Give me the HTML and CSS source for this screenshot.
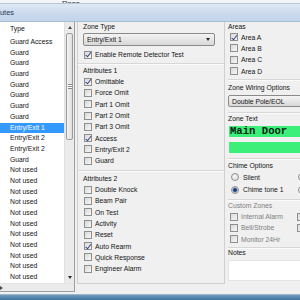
FILE: index.html
```html
<!DOCTYPE html>
<html lang="en">
<head>
<meta charset="utf-8">
<title>Zone Attributes</title>
<link rel="stylesheet" href="styles.css">
</head>
<body>
<div class="topstrip"><span class="tab">Pass</span></div>
<div class="titlebar">utes</div>

<div class="main">
 <!-- Zone list -->
 <div class="list">
  <div class="list-body">
   <div class="rows">
    <div class="row head">Type</div>
    <div class="row">Guard Access</div>
    <div class="row">Guard</div>
    <div class="row">Guard</div>
    <div class="row">Guard</div>
    <div class="row">Guard</div>
    <div class="row">Guard</div>
    <div class="row">Guard</div>
    <div class="row">Guard</div>
    <div class="row sel">Entry/Exit 1</div>
    <div class="row">Entry/Exit 2</div>
    <div class="row">Entry/Exit 2</div>
    <div class="row">Guard</div>
    <div class="row">Not used</div>
    <div class="row">Not used</div>
    <div class="row">Not used</div>
    <div class="row">Not used</div>
    <div class="row">Not used</div>
    <div class="row">Not used</div>
    <div class="row">Not used</div>
    <div class="row">Not used</div>
    <div class="row">Not used</div>
    <div class="row">Not used</div>
    <div class="row">Not used</div>
   </div>
   <div class="vscroll">
    <span class="sbtn"><i class="tri up"></i></span>
    <span class="track"><span class="thumb"><i class="grip"></i></span></span>
    <span class="sbtn"><i class="tri down"></i></span>
   </div>
  </div>
  <div class="hscroll">
   <span class="hbar"><i class="tri right"></i></span>
   <span class="corner"></span>
  </div>
 </div>

 <!-- Middle column -->
 <div class="mid">
  <div class="group g-type">
   <div class="lbl">Zone Type</div>
   <div class="select wide">Entry/Exit 1<i class="tri down"></i></div>
   <div class="chk first"><span class="cb on"></span>Enable Remote Detector Test</div>
  </div>
  <div class="group g-attr">
   <div class="lbl">Attributes 1</div>
   <div class="chk"><span class="cb on"></span>Omittable</div>
   <div class="chk"><span class="cb"></span>Force Omit</div>
   <div class="chk"><span class="cb"></span>Part 1 Omit</div>
   <div class="chk"><span class="cb"></span>Part 2 Omit</div>
   <div class="chk"><span class="cb"></span>Part 3 Omit</div>
   <div class="chk"><span class="cb on"></span>Access</div>
   <div class="chk"><span class="cb"></span>Entry/Exit 2</div>
   <div class="chk"><span class="cb"></span>Guard</div>
  </div>
  <div class="group g-attr2">
   <div class="lbl">Attributes 2</div>
   <div class="chk"><span class="cb"></span>Double Knock</div>
   <div class="chk"><span class="cb"></span>Beam Pair</div>
   <div class="chk"><span class="cb"></span>On Test</div>
   <div class="chk"><span class="cb"></span>Activity</div>
   <div class="chk"><span class="cb"></span>Reset</div>
   <div class="chk"><span class="cb on"></span>Auto Rearm</div>
   <div class="chk"><span class="cb"></span>Quick Response</div>
   <div class="chk"><span class="cb"></span>Engineer Alarm</div>
  </div>
 </div>

 <!-- Right column -->
 <div class="right">
  <div class="group g-areas">
   <div class="lbl">Areas</div>
   <div class="chk"><span class="cb on"></span>Area A</div>
   <div class="chk"><span class="cb"></span>Area B</div>
   <div class="chk"><span class="cb"></span>Area C</div>
   <div class="chk"><span class="cb"></span>Area D</div>
  </div>
  <div class="group g-wiring">
   <div class="lbl">Zone Wiring Options</div>
   <div class="select long">Double Pole/EOL<i class="tri down"></i></div>
  </div>
  <div class="group g-text">
   <div class="lbl">Zone Text</div>
   <div class="lcd">Main Door</div>
   <div class="lcd second"></div>
  </div>
  <div class="group g-chime">
   <div class="lbl">Chime Options</div>
   <div class="cols">
    <div class="opt"><span class="rb"></span>Silent</div>
    <div class="opt"><span class="rb"></span></div>
    <div class="opt"><span class="rb on"></span>Chime tone 1</div>
    <div class="opt"><span class="rb"></span></div>
   </div>
  </div>
  <div class="group g-custom">
   <div class="lbl dim">Custom Zones</div>
   <div class="cols tight">
    <div class="chk dim"><span class="cb"></span>Internal Alarm</div>
    <div class="chk dim"><span class="cb"></span></div>
    <div class="chk dim"><span class="cb"></span>Bell/Strobe</div>
    <div class="chk dim"><span class="cb"></span></div>
    <div class="chk dim"><span class="cb"></span>Monitor 24Hr</div>
   </div>
  </div>
  <div class="group g-notes">
   <div class="lbl">Notes</div>
   <div class="notes"></div>
  </div>
 </div>
</div>

<div class="taskbar"></div>
</body>
</html>
```

FILE: styles.css
```css
/* ---------- Base ---------- */
*{box-sizing:border-box}
html,body{margin:0;width:300px;height:300px;overflow:hidden}
body{font-family:"Liberation Sans",Arial,sans-serif;font-size:6.8px;color:#141414;background:#f0f0f0}

/* ---------- Window chrome ---------- */
.topstrip{height:4px;background:#f3f5f8;border-bottom:1px solid #b7c7da;position:relative;overflow:hidden;padding-left:58px}
.topstrip .tab{display:inline-block;height:4px;line-height:0;font-size:8px;color:#333;border-left:1px solid #7a8796;border-right:1px solid #b5c0cc;padding:0 3px;width:136px}
.titlebar{height:18px;line-height:18px;padding-left:0;font-size:7.4px;color:#1d3552;background:linear-gradient(#dfe9f5,#cad9ec 60%,#c3d5ea);border-bottom:1px solid #a9bcd3}
.taskbar{height:6px;border-top:1px solid #9fb3c6;background:linear-gradient(#6f9cc0,#3f739f)}

.main{display:flex;height:272px;background:#f0f0f0}

/* ---------- List ---------- */
.list{width:75px;flex:none;height:270px;background:#fff;border-right:1px solid #9aa0a8;border-bottom:1px solid #9aa0a8;display:flex;flex-direction:column}
.list-body{display:flex;flex:1;min-height:0}
.rows{flex:1;overflow:hidden}
.row{height:10.7px;line-height:10.7px;padding-left:10px;white-space:nowrap}
.row.head{height:15px;line-height:13px;padding-bottom:2px}
.row.sel{background:#3399ff;color:#fff}
.vscroll{width:10px;flex:none;display:flex;flex-direction:column;background:#ebebeb;border-left:1px solid #e0e0e0}
.sbtn{height:11px;flex:none;display:flex;align-items:center;justify-content:center}
.track{flex:1;padding:0 1px}
.thumb{display:flex;align-items:center;justify-content:center;margin-top:0;height:107px;border:1px solid #9b9b9b;border-radius:2px;background:linear-gradient(90deg,#f4f4f4,#dedede)}
.grip{width:4px;height:5px;border-top:1px solid #8a8a8a;border-bottom:1px solid #8a8a8a;background:linear-gradient(#fff 0 1px,#8a8a8a 1px 2px,#fff 2px)}
.hscroll{height:8px;display:flex;border-top:1px solid #e4e4e4;background:#ebebeb}
.hbar{flex:1;display:flex;align-items:center;justify-content:flex-end;padding-right:4px}
.corner{width:10px;background:#f0f0f0}
.tri{display:inline-block;width:0;height:0;border:2.5px solid transparent}
.tri.up{border-bottom:3px solid #4a4a4a;border-top:0}
.tri.down{border-top:3px solid #2a2a2a;border-bottom:0}
.tri.right{border-left:3px solid #4a4a4a;border-right:0}

/* ---------- Panels ---------- */
.mid{width:148px;flex:none;margin-left:2px;border-left:1px solid #cfcfcf;border-right:1px solid #cfcfcf;border-bottom:1px solid #cfcfcf;height:262px;padding-left:5px;padding-right:8px}
.right{width:140px;flex:none;padding-left:3px}
.group{border-bottom:1px solid #d7d7d7;box-shadow:0 1px 0 #fbfbfb}
.lbl{height:10px;line-height:10px;white-space:nowrap}
.dim{color:#7e7e7e}

.g-type{height:42px;margin-right:-8px;margin-left:-5px;padding-left:5px}
.g-type .lbl{height:9px;line-height:9px}
.g-attr{height:107px;padding-top:2px;margin:0 -8px 0 -5px;padding-left:5px}
.g-attr2{height:112px;padding-top:3px;margin:0 -8px 0 -5px;padding-left:5px;border-bottom:0;box-shadow:none}

.chk,.opt{height:11.3px;display:flex;align-items:center;white-space:nowrap;padding-left:1px}
.chk.first{margin-top:3px}
.cb{width:8px;height:8px;flex:none;margin-right:3px;border:1px solid #8e8f8f;background:linear-gradient(135deg,#d9d9d9,#f7f7f7);position:relative}
.cb.on::after{content:"";position:absolute;left:2.2px;top:-.2px;width:1.8px;height:4.6px;border:solid #2b3d7c;border-width:0 1.4px 1.4px 0;transform:rotate(38deg)}
.rb{width:8px;height:8px;flex:none;margin-right:4px;border:1px solid #8e8f8f;border-radius:50%;background:radial-gradient(circle at 40% 40%,#f8f8f8,#d5d5d5)}
.rb.on{background:radial-gradient(circle,#1f3b73 0 1.4px,#6f8bbd 2px,#e2e6ee 3px)}

.select{height:13px;margin-top:2px;border:1px solid #8a8a8a;border-radius:2px;background:linear-gradient(#f4f4f4,#e6e6e6 50%,#d8d8d8);display:flex;align-items:center;justify-content:space-between;padding:0 4px 0 3px;white-space:nowrap}
.select.wide{width:132px}
.select.long{width:120px;height:12px}

/* right column groups */
.g-areas{height:58px;padding-top:0}
.g-areas .lbl{height:9.5px;line-height:9px}
.g-areas .chk{padding-left:2px}
.g-wiring{height:33px;padding-top:3px}
.g-text{height:46px;padding-top:1px}
.lcd{height:11px;width:120px;margin-top:2px;margin-left:1px;background:#3cef78;font-family:"Liberation Mono","DejaVu Sans Mono",monospace;font-weight:bold;font-size:10.6px;line-height:11px;color:#0b2414;padding-left:1px}
.lcd.second{margin-top:5px}
.g-chime{height:41px;padding-top:2px}
.cols{display:grid;grid-template-columns:67px 60px}
.g-chime .opt{height:12.5px;padding-left:3px}
.g-custom{height:48px;padding-top:1px}
.g-custom .chk{padding-left:2px}
.g-notes{border-bottom:0;box-shadow:none}
.notes{height:21px;width:120px;margin-top:2px;background:#fff;border:1px solid #e4e4e4}
```
